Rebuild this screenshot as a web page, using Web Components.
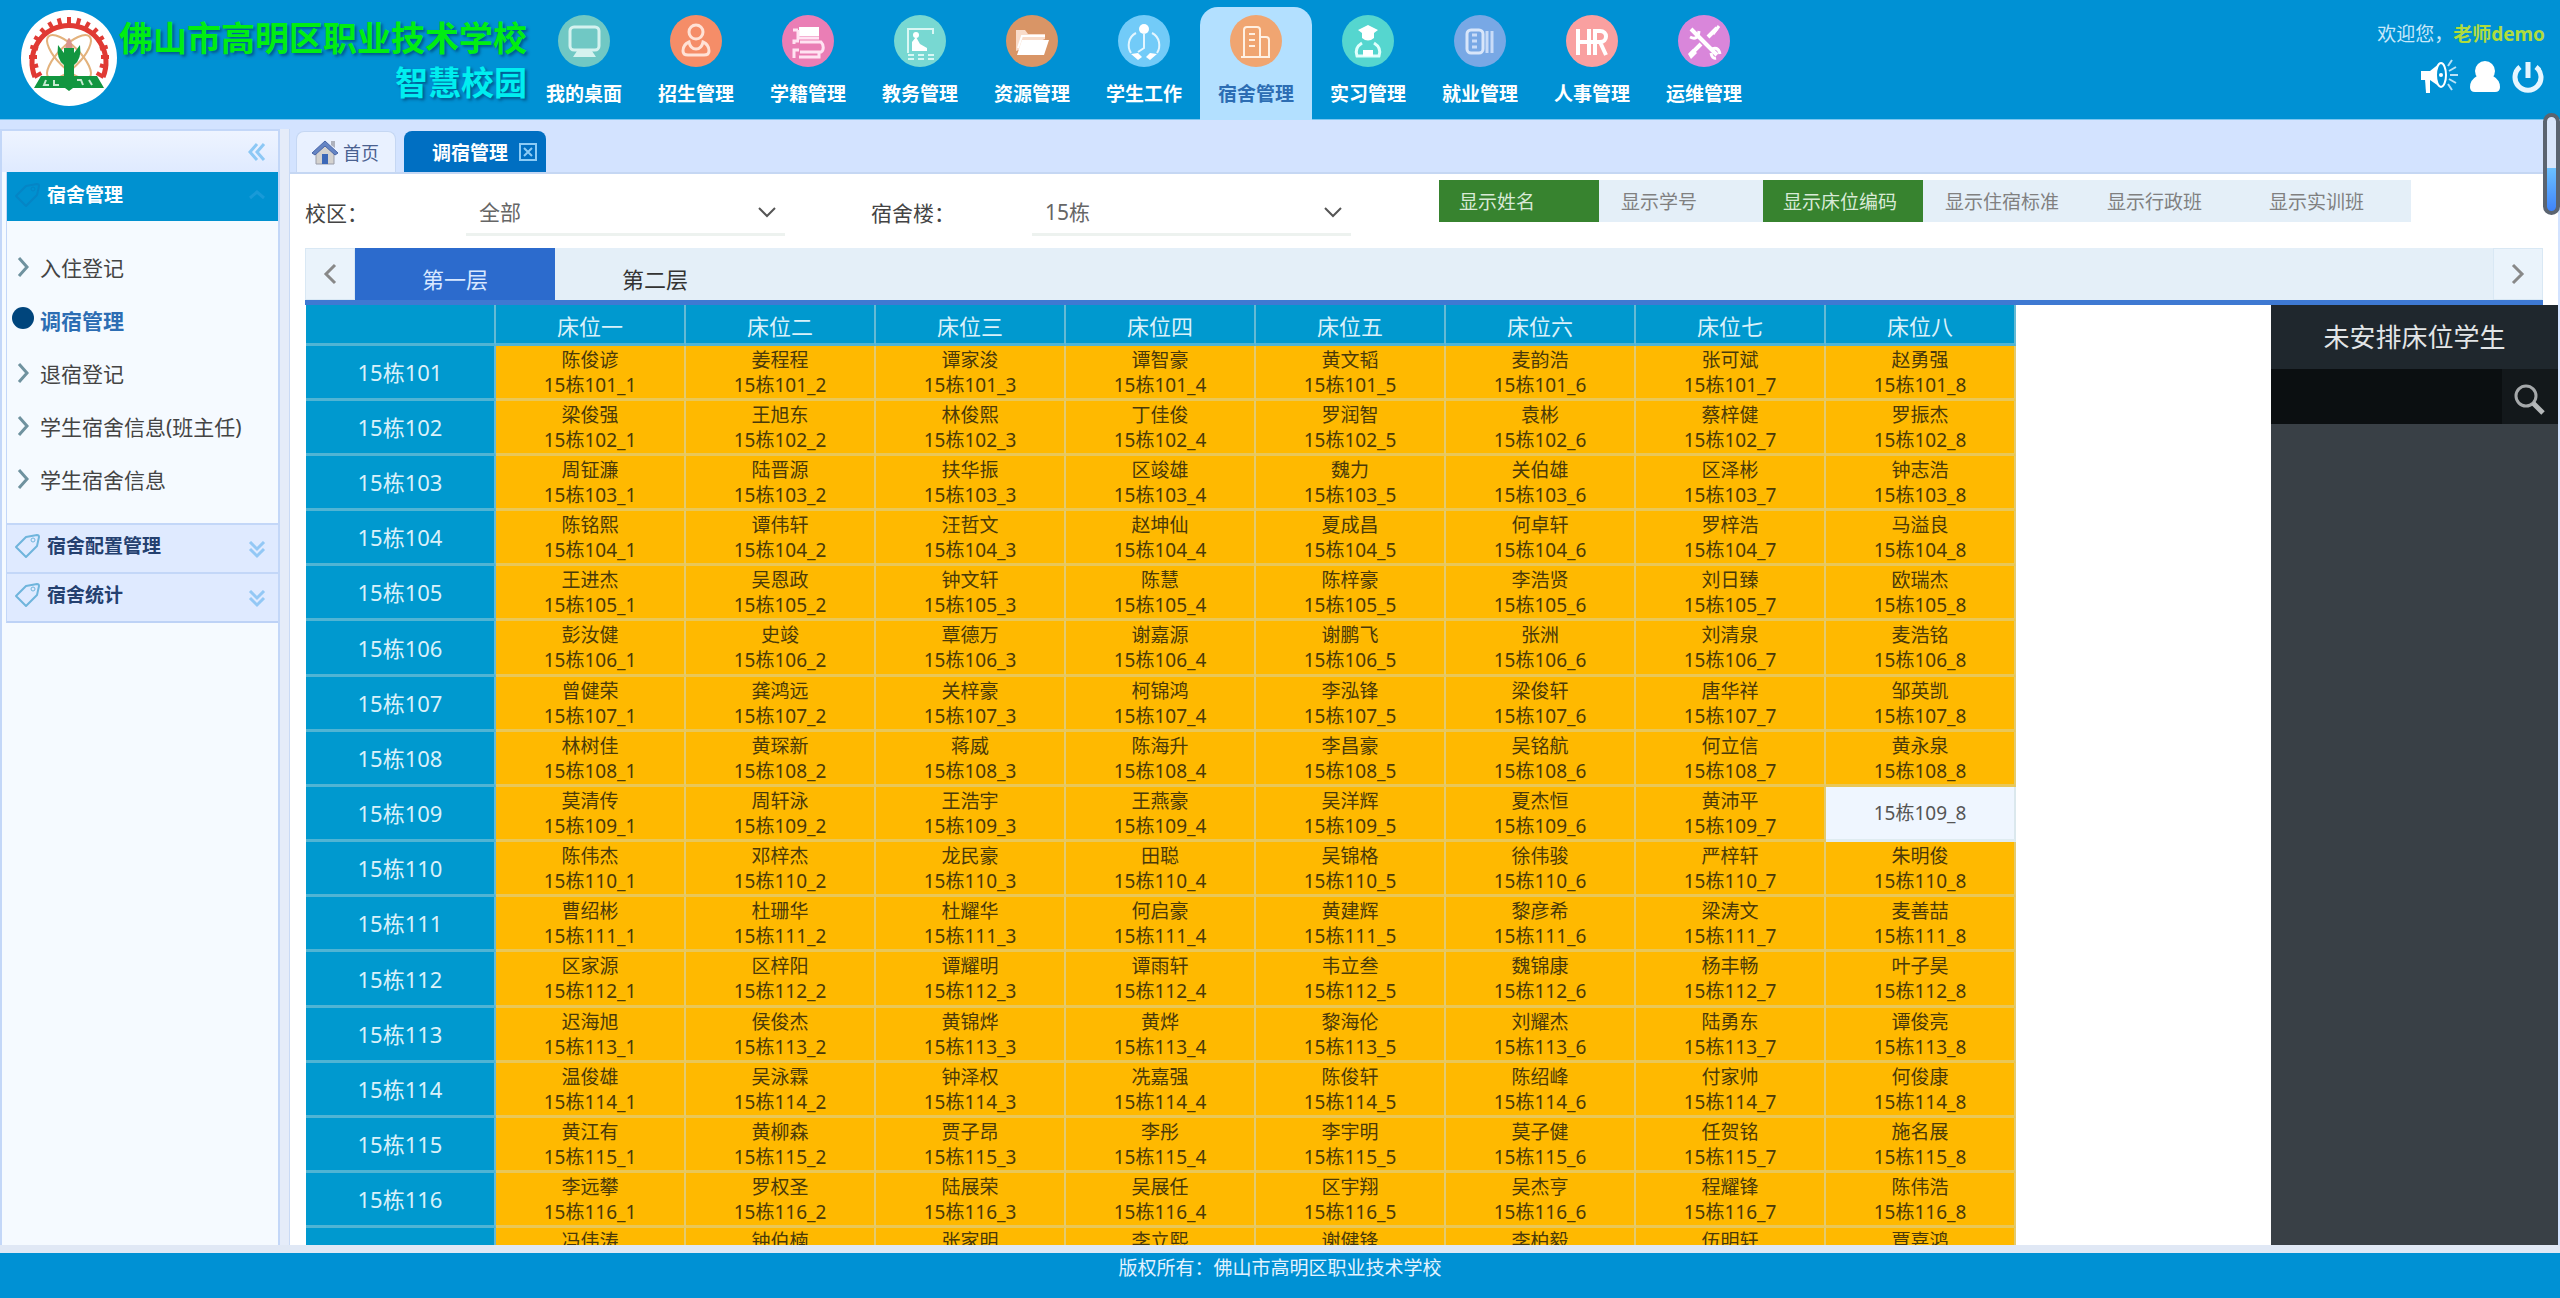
<!DOCTYPE html>
<html lang="zh-CN">
<head>
<meta charset="UTF-8">
<meta name="viewport" content="width=device-width, initial-scale=1.0">
<title>智慧校园</title>
<style>
  body {
    margin: 0;
    font-family: "Noto Sans", "Noto Sans CJK SC", sans-serif;
    font-size: 19px;
    color: #444;
    background: #d3e3ff;
  }
</style>
</head>
<body>
<campus-app>
  <campus-header slot="header">
    <nav-item icon="desktop" color="#70c8c4">我的桌面</nav-item>
    <nav-item icon="recruit" color="#f58d68">招生管理</nav-item>
    <nav-item icon="roll" color="#ea7eb5">学籍管理</nav-item>
    <nav-item icon="teach" color="#78d8d2">教务管理</nav-item>
    <nav-item icon="folder" color="#d99566">资源管理</nav-item>
    <nav-item icon="student" color="#72cbf8">学生工作</nav-item>
    <nav-item icon="dorm" color="#f0a571" active>宿舍管理</nav-item>
    <nav-item icon="intern" color="#55d6cf">实习管理</nav-item>
    <nav-item icon="job" color="#78a8e5">就业管理</nav-item>
    <nav-item icon="hr" color="#f9a0a0">人事管理</nav-item>
    <nav-item icon="tools" color="#d986da">运维管理</nav-item>
  </campus-header>
  <side-menu slot="side">
    <menu-group heading="宿舍管理" open>
      <menu-link>入住登记</menu-link>
      <menu-link active>调宿管理</menu-link>
      <menu-link>退宿登记</menu-link>
      <menu-link>学生宿舍信息(班主任)</menu-link>
      <menu-link>学生宿舍信息</menu-link>
    </menu-group>
    <menu-group heading="宿舍配置管理"></menu-group>
    <menu-group heading="宿舍统计"></menu-group>
  </side-menu>
  <page-tabs slot="main"></page-tabs>
  <filter-bar slot="main"></filter-bar>
  <floor-tabs slot="main"></floor-tabs>
  <dorm-board slot="main">
    <bed-table></bed-table>
    <student-panel slot="panel"></student-panel>
  </dorm-board>
  <span slot="footer">版权所有：佛山市高明区职业技术学校</span>
</campus-app>

<script>
const ICONS = {
  desktop: '<rect x="12" y="12" width="29" height="23" rx="4" fill="none" stroke="#d5f2ef" stroke-width="3"/><path d="M15 42h23l-4-6H19z" fill="#d5f2ef"/>',
  recruit: '<g fill="none" stroke="#ffe2d6" stroke-width="3"><circle cx="26" cy="17" r="7"/><path d="M19 27c-5 2-6 5-6 9 0 3 2 4 5 4h16c3 0 5-1 5-4 0-4-1-7-6-9-1 5-3 7-7 7s-6-2-7-7z"/></g>',
  roll: '<path d="M17 12h20v9H17z" fill="#fff"/><path d="M11 15h5m0 0v8h21M18 27h21c3 3 3 8 0 10H18m-6-8v-3h5m0 9h-5v8m5-1h20v-5" fill="none" stroke="#ffe3f2" stroke-width="3"/>',
  teach: '<path d="M14 38V14h25v5M14 14v24M14 40h6m4 0h6m4 0h6M14 44h6m4 0h6m4 0h6" fill="none" stroke="#d9f7f4" stroke-width="2"/><path d="M18 36V27l4-5 4 7 7 4v3z" fill="#fff"/><circle cx="22" cy="20" r="3" fill="#fff"/>',
  folder: '<path d="M10 36V15h9l3 4h17v5" fill="#f9dcca"/><path d="M16 25h27l-5 15H11z" fill="#fff"/><path d="M12 33l4-12h23" fill="none" stroke="#fff" stroke-width="2"/>',
  student: '<circle cx="26" cy="14" r="5" fill="#fff"/><path d="M26 18v15l-6 4M18 18c-8 4-9 14-5 20m21-20c8 4 9 14 5 20" fill="none" stroke="#e4f6ff" stroke-width="2"/><path d="M13 39l7-1 4 4-4 3zm26 0l-7-1-4 4 4 3z" fill="#fff"/>',
  dorm: '<g fill="none" stroke="#fff0e2" stroke-width="2"><path d="M14 42V15q0-3 3-3h10q3 0 3 3v27M30 22h6q3 0 3 3v17H11"/><path d="M19 19h6m-6 6h6m-6 6h6"/></g>',
  intern: '<path d="M16 15l10-5 10 5-4 3v5q-6 5-12 0v-5z" fill="#fff"/><path d="M20 28q-8 5-5 13h22q3-8-5-13" fill="none" stroke="#e0fffc" stroke-width="3"/><path d="M21 35h10v6H21z" fill="#fff"/>',
  job: '<rect x="13" y="15" width="16" height="23" rx="4" fill="none" stroke="#d8e6fa" stroke-width="3"/><path d="M18 20h5m-5 6h5m-5 6h5M33 16v22m5-22v22" stroke="#c9dcf8" stroke-width="3"/>',
  hr: '<path d="M12 14v26M23 14v26M12 27h17M29 40V16h5c8 0 8 11 0 11h-4m4 0l6 13" fill="none" stroke="#fff" stroke-width="4"/>',
  tools: '<path d="M13 14l7 7 19 19M39 13l-9 9M23 29L12 40" stroke="#fff" stroke-width="4"/><path d="M12 22q8 4 9-6M32 35q8-5 10 4M33 38q1 6 5 5M35 19l6-8" fill="none" stroke="#fff" stroke-width="3"/><path d="M10 39l5-5 4 4-6 6z" fill="#fff"/>'
};

// small line icons shared by the chrome of the page
const CHEVRON_DOWN = '<svg width="20" height="14" viewBox="0 0 20 14"><path d="M2 3l8 8 8-8" fill="none" stroke="#555" stroke-width="2"/></svg>';
const TAG = '<svg width="26" height="26" viewBox="0 0 26 26"><path d="M2 14L12 4l11-2q2 0 2 2l-2 9-11 11z" fill="none" stroke="currentColor" stroke-width="2" stroke-linejoin="round"/><circle cx="19" cy="7" r="2" fill="none" stroke="currentColor"/></svg>';

class CampusApp extends HTMLElement {
  connectedCallback() {
    this.attachShadow({ mode: 'open' });
    this.shadowRoot.innerHTML = `
      <style>
        :host { display: flex; flex-direction: column; height: 100vh; overflow: hidden; position: relative; }
        .work { flex: 1; min-height: 0; display: flex; background: #d3e3ff; }
        .splitter { width: 10px; margin-top: 9px; background: #e5ecf9; border-right: 1px solid #c9daf5; box-sizing: border-box; }
        main { flex: 1; min-width: 0; display: flex; flex-direction: column; background: #fff; border-right: 2px solid #d3e3ff; }
        footer { height: 45px; box-sizing: border-box; padding-top: 3px; line-height: 24px; text-align: center; color: #e3f3ff; background: #0091d4; }
        .strip { height: 8px; background: #e0e8f5; }
        .meter {
          position: absolute; right: 0; top: 113px; width: 17px; height: 102px; box-sizing: border-box;
          border: 4px solid #5b6470; border-radius: 9px;
          background: linear-gradient(#d9e6fb 54%, #6cc2ff 54%, #3f83fa);
        }
      </style>
      <slot name="header"></slot>
      <div class="work">
        <slot name="side"></slot>
        <div class="splitter"></div>
        <main><slot name="main"></slot></main>
      </div>
      <div class="strip"></div>
      <footer><slot name="footer"></slot></footer>
      <div class="meter"></div>
    `;
  }
}

class CampusHeader extends HTMLElement {
  connectedCallback() {
    // teeth of the gear in the school badge
    let teeth = '';
    for (let a = -120; a <= 120; a += 15) {
      teeth += `<rect x="47" y="8" width="4" height="8" transform="rotate(${a} 49 48)"/>`;
    }
    this.attachShadow({ mode: 'open' });
    this.shadowRoot.innerHTML = `
      <style>
        :host { display: flex; height: 119px; flex: none; background: #0091d4; border-bottom: 1px solid #7cc6f0; }
        .brand { display: flex; width: 528px; box-sizing: border-box; padding: 9px 2px 0 20px; }
        .brand svg { flex: none; margin-right: 1px; }
        .name { flex: 1; text-align: right; font-weight: 700; white-space: nowrap; text-shadow: 2px 2px 3px rgba(0, 50, 90, .6); font-family: "Noto Sans CJK SC", sans-serif; }
        h1 { margin: 4px 0 0; font-size: 34px; line-height: 48px; color: #00ee12; }
        p { margin: 0; font-size: 33px; line-height: 40px; color: #00eef0; }
        nav { display: flex; }
        .user { margin-left: auto; padding: 20px 15px 0 0; }
        .hello { line-height: 28px; color: #c8e8fa; }
        .hello b { color: #b0dc3c; }
        .acts { display: flex; justify-content: flex-end; gap: 10px; margin-top: 11px; }
        button { padding: 0; border: 0; background: none; height: 36px; }
      </style>
      <div class="brand">
        <svg width="98" height="98" viewBox="0 0 98 98">
          <circle cx="49" cy="49" r="48" fill="#fff"/>
          <path d="M15 68A37 37 0 1 1 83 68" fill="none" stroke="#e03a34" stroke-width="5"/>
          <g fill="#e03a34">${teeth}</g>
          <g fill="none" stroke="#e3b27c" stroke-width="2"><ellipse cx="49" cy="48" rx="29" ry="11" transform="rotate(45 49 48)"/><ellipse cx="49" cy="48" rx="29" ry="11" transform="rotate(-45 49 48)"/></g>
          <path d="M45 40q4-22 8 0l-2 6h-4z" fill="#d8938c"/>
          <path d="M38 36l6 8v-5h10v5l6-8q2 14-6 20v14H44V56q-8-6-6-20z" fill="#129640"/>
          <path d="M21 67h26l2 3 2-3h26l7 12H53l-4 3-4-3H14z" fill="#129640"/>
          <path d="M26 71l-2 5h5m5-5v5h5m18-5h4l2 5m6-5l3 5" fill="none" stroke="#c5e9cf" stroke-width="2"/>
        </svg>
        <div class="name"><h1>佛山市高明区职业技术学校</h1><p>智慧校园</p></div>
      </div>
      <nav><slot></slot></nav>
      <div class="user">
        <div class="hello">欢迎您，<b>老师demo</b></div>
        <div class="acts">
          <button aria-label="公告"><svg width="40" height="36" viewBox="0 0 40 36"><path d="M2 12h9l10-8v24l-10-7H2z" fill="#fff"/><path d="M6 20h5v14H7z" fill="#fff"/><ellipse cx="22" cy="16" rx="5" ry="12" fill="#0091d4" stroke="#fff" stroke-width="2"/><circle cx="22" cy="16" r="2" fill="#fff"/><path d="M29 7l4-6m-3 11l7-4m-6 8h8m-9 4l7 4m-8 1l4 6" stroke="#b9e2f7" stroke-width="2"/></svg></button>
          <button aria-label="用户"><svg width="32" height="36" viewBox="0 0 32 36"><circle cx="16" cy="12" r="10" fill="#fff"/><path d="M8 17h16q7 4 7 11 0 5-5 5H6q-5 0-5-5 0-7 7-11z" fill="#fff"/></svg></button>
          <button aria-label="退出"><svg width="34" height="36" viewBox="0 0 34 36"><path d="M9 8a13 13 0 1 0 16 0M17 3v16" fill="none" stroke="#e6f6ff" stroke-width="5"/></svg></button>
        </div>
      </div>
    `;
  }
}

class NavItem extends HTMLElement {
  connectedCallback() {
    this.attachShadow({ mode: 'open' });
    this.shadowRoot.innerHTML = `
      <style>
        :host { display: block; width: 112px; }
        a {
          display: block; height: 113px; margin-top: 7px; padding-top: 8px; box-sizing: border-box;
          border-radius: 18px 18px 0 0; text-align: center; text-decoration: none;
          font-weight: 700; color: #fff;
        }
        svg { display: block; margin: 0 auto 15px; }
        span { display: block; line-height: 24px; }
        :host([active]) a { background: #b3e0ff; color: #2c6db3; }
      </style>
      <a href="#">
        <svg width="52" height="52" viewBox="0 0 52 52"><circle cx="26" cy="26" r="26" fill="${this.getAttribute('color')}"/>${ICONS[this.getAttribute('icon')]}</svg>
        <span><slot></slot></span>
      </a>
    `;
  }
}

class SideMenu extends HTMLElement {
  connectedCallback() {
    this.attachShadow({ mode: 'open' });
    this.shadowRoot.innerHTML = `
      <style>
        :host { display: block; width: 280px; box-sizing: border-box; margin-top: 9px; border: 2px solid #c3d7f8; border-bottom: 0; background: #f5faff; }
        .top { height: 41px; display: flex; justify-content: flex-end; align-items: center; padding-right: 12px; background: linear-gradient(#eef4ff, #dfeaff); }
        button { padding: 0; border: 0; background: none; height: 18px; }
        .groups { margin-left: 4px; border-left: 1px solid #c3d7f8; border-bottom: 2px solid #bdd2f6; }
      </style>
      <div class="top">
        <button aria-label="收起"><svg width="18" height="18" viewBox="0 0 18 18"><path d="M9 1L2 9l7 8M16 1L9 9l7 8" fill="none" stroke="#8cc8f5" stroke-width="3"/></svg></button>
      </div>
      <div class="groups"><slot></slot></div>
    `;
  }
}

class MenuGroup extends HTMLElement {
  connectedCallback() {
    this.attachShadow({ mode: 'open' });
    const arrow = this.hasAttribute('open') ? 'M2 8l7-6 7 6' : 'M2 1l7 7 7-7M2 8l7 7 7-7';
    this.shadowRoot.innerHTML = `
      <style>
        :host { display: block; }
        h2 {
          display: flex; align-items: center; margin: 0; height: 49px; box-sizing: border-box;
          padding: 0 12px 6px 7px; border-top: 2px solid #c3d7f8;
          font-size: 19px; line-height: 24px; color: #24406f; background: #dfeaff;
        }
        h2 svg:first-child { color: #6fb5dc; margin-right: 7px; }
        h2 svg:last-child { margin-left: auto; margin-top: 8px; }
        .list { padding: 19px 0 18px; }
        :host([open]) h2 { background: #0091d0; border-top-color: #0091d0; color: #fff; }
        :host([open]) h2 svg:first-child { color: #0585c5; }
        :host(:not([open])) .list { display: none; }
      </style>
      <h2>${TAG}${this.getAttribute('heading')}<svg width="18" height="18" viewBox="0 0 18 18"><path d="${arrow}" fill="none" stroke="${this.hasAttribute('open') ? '#189ad8' : '#93c8f5'}" stroke-width="3"/></svg></h2>
      <div class="list"><slot></slot></div>
    `;
  }
}

class MenuLink extends HTMLElement {
  connectedCallback() {
    this.attachShadow({ mode: 'open' });
    const mark = this.hasAttribute('active')
      ? '<circle cx="13" cy="12" r="11" fill="#00457c"/>'
      : '<path d="M9 5l8 9-8 9" fill="none" stroke="#6f929f" stroke-width="3"/>';
    this.shadowRoot.innerHTML = `
      <style>
        :host { display: block; height: 53px; }
        a { display: flex; align-items: center; height: 53px; padding-left: 3px; font-size: 21px; white-space: nowrap; color: #444; text-decoration: none; }
        svg { flex: none; margin-right: 4px; }
        :host([active]) a { color: #2c6db3; font-weight: 700; }
      </style>
      <a href="#"><svg width="26" height="28" viewBox="0 0 26 28">${mark}</svg><slot></slot></a>
    `;
  }
}

class PageTabs extends HTMLElement {
  connectedCallback() {
    this.attachShadow({ mode: 'open' });
    this.shadowRoot.innerHTML = `
      <style>
        :host { display: flex; align-items: flex-end; gap: 8px; height: 54px; box-sizing: border-box; flex: none; padding: 0 6px; background: #d3e3ff; border-bottom: 2px solid #c5d7f3; }
        a { display: flex; align-items: center; height: 41px; box-sizing: border-box; border-radius: 8px 8px 0 0; text-decoration: none; }
        .home { width: 100px; padding-left: 14px; gap: 4px; font-size: 18px; color: #4a6190; background: #e9f1ff; border: 1px solid #c5d7f3; border-bottom: 0; }
        .now { width: 142px; justify-content: flex-end; gap: 10px; padding-right: 8px; font-weight: 700; color: #fff; background: #006fc2; }
      </style>
      <a class="home" href="#"><svg width="28" height="28" viewBox="0 0 28 28"><path d="M5 13v13h18V13l-9-8z" fill="#d4d2cf" stroke="#9a9da8"/><path d="M1 15L14 3l13 12-3 2L14 8 4 17z" fill="#6585c4" stroke="#4a66a8"/><path d="M20 3h4v7l-4-3z" fill="#aeb2bd"/><path d="M11 16h6v10h-6z" fill="#3c68b8"/></svg>首页</a>
      <a class="now" href="#">调宿管理<svg width="20" height="20" viewBox="0 0 20 20"><path d="M2 2h16v16H2zM6 6l8 8m0-8l-8 8" fill="none" stroke="#8ccbf5" stroke-width="2"/></svg></a>
    `;
  }
}

class FilterBar extends HTMLElement {
  connectedCallback() {
    const toggles = [['显示姓名', true], ['显示学号', false], ['显示床位编码', true], ['显示住宿标准', false], ['显示行政班', false], ['显示实训班', false]];
    this.attachShadow({ mode: 'open' });
    this.shadowRoot.innerHTML = `
      <style>
        :host { display: flex; align-items: flex-start; height: 74px; flex: none; padding-left: 15px; }
        label { width: 161px; padding-top: 24px; line-height: 30px; font-size: 21px; }
        .pick { display: grid; width: 319px; height: 62px; box-sizing: border-box; padding-top: 17px; border-bottom: 3px solid #edf2ef; margin-right: 86px; }
        .pick > * { grid-area: 1 / 1; }
        .pick svg { justify-self: end; align-self: center; margin-right: 8px; pointer-events: none; }
        select { appearance: none; border: 0; background: none; padding: 0 0 0 13px; font: inherit; font-size: 21px; color: #666; }
        .toggles { display: flex; gap: 2px; margin: 6px 0 0 2px; padding-right: 2px; background: #e4eff8; }
        button { width: 160px; height: 42px; padding: 0 0 0 20px; border: 0; background: none; font: inherit; text-align: left; color: #808080; }
        button[aria-pressed="true"] { background: #37832f; color: #d9ead7; }
      </style>
      <label for="campus">校区：</label>
      <div class="pick"><select id="campus"><option>全部</option></select>${CHEVRON_DOWN}</div>
      <label for="building">宿舍楼：</label>
      <div class="pick"><select id="building"><option>15栋</option></select>${CHEVRON_DOWN}</div>
      <div class="toggles">
        ${toggles.map(([text, on]) => `<button aria-pressed="${on}">${text}</button>`).join('')}
      </div>
    `;
  }
}

class FloorTabs extends HTMLElement {
  connectedCallback() {
    this.attachShadow({ mode: 'open' });
    this.shadowRoot.innerHTML = `
      <style>
        :host { display: flex; flex: none; height: 52px; margin: 0 15px; background: #e4eff8; border-bottom: 5px solid #3e79d2; }
        button { border: 0; padding: 8px 0 0; font: inherit; font-size: 22px; color: #333; background: none; width: 200px; }
        .on { background: #2c6bcd; color: #d8e8ff; }
        .step { width: 50px; padding: 4px 0 0; background: #eaf3fb; border: 1px solid #d9e8f4; }
        .step:last-child { margin-left: auto; }
      </style>
      <button class="step" aria-label="上一层"><svg width="14" height="22" viewBox="0 0 14 22"><path d="M12 2L3 11l9 9" fill="none" stroke="#888" stroke-width="3"/></svg></button>
      <button class="on">第一层</button>
      <button>第二层</button>
      <button class="step" aria-label="下一层"><svg width="14" height="22" viewBox="0 0 14 22"><path d="M2 2l9 9-9 9" fill="none" stroke="#888" stroke-width="3"/></svg></button>
    `;
  }
}

class DormBoard extends HTMLElement {
  connectedCallback() {
    this.attachShadow({ mode: 'open' });
    this.shadowRoot.innerHTML = `
      <style>
        :host { display: flex; justify-content: space-between; flex: 1; min-height: 0; padding-left: 16px; }
        .beds { overflow: hidden; }
      </style>
      <div class="beds"><slot></slot></div>
      <slot name="panel"></slot>
    `;
  }
}

const ROOMS = [
  '陈俊谚 姜程程 谭家浚 谭智豪 黄文韬 麦韵浩 张可斌 赵勇强',
  '梁俊强 王旭东 林俊熙 丁佳俊 罗润智 袁彬 蔡梓健 罗振杰',
  '周钲濂 陆晋源 扶华振 区竣雄 魏力 关伯雄 区泽彬 钟志浩',
  '陈铭熙 谭伟轩 汪哲文 赵坤仙 夏成昌 何卓轩 罗梓浩 马溢良',
  '王进杰 吴恩政 钟文轩 陈慧 陈梓豪 李浩贤 刘日臻 欧瑞杰',
  '彭汝健 史竣 覃德万 谢嘉源 谢鹏飞 张洲 刘清泉 麦浩铭',
  '曾健荣 龚鸿远 关梓豪 柯锦鸿 李泓锋 梁俊轩 唐华祥 邹英凯',
  '林树佳 黄琛新 蒋威 陈海升 李昌豪 吴铭航 何立信 黄永泉',
  '莫清传 周轩泳 王浩宇 王燕豪 吴洋辉 夏杰恒 黄沛平',
  '陈伟杰 邓梓杰 龙民豪 田聪 吴锦格 徐伟骏 严梓轩 朱明俊',
  '曹绍彬 杜珊华 杜耀华 何启豪 黄建辉 黎彦希 梁涛文 麦善喆',
  '区家源 区梓阳 谭耀明 谭雨轩 韦立叁 魏锦康 杨丰畅 叶子昊',
  '迟海旭 侯俊杰 黄锦烨 黄烨 黎海伦 刘耀杰 陆勇东 谭俊亮',
  '温俊雄 吴泳霖 钟泽权 冼嘉强 陈俊轩 陈绍峰 付家帅 何俊康',
  '黄江有 黄柳森 贾子昂 李彤 李宇明 莫子健 任贺铭 施名展',
  '李远攀 罗权圣 陆展荣 吴展任 区宇翔 吴杰亨 程耀锋 陈伟浩'
];

// the room after the last full row, cut off by the bottom of the board
const NEXT_ROOM = '冯伟涛 钟伯楠 张家明 李立熙 谢健锋 李柏毅 伍明轩 覃嘉鸿';

class BedTable extends HTMLElement {
  connectedCallback() {
    const rows = ROOMS.map((line, i) => {
      const room = '15栋' + (101 + i);
      const names = line.split(' ');
      let cells = '';
      for (let bed = 1; bed <= 8; bed++) {
        const name = names[bed - 1];
        cells += name
          ? `<td>${name}<br>${room}_${bed}</td>`
          : `<td class="free">${room}_${bed}</td>`;
      }
      return `<tr><th scope="row">${room}</th>${cells}</tr>`;
    }).join('');

    this.attachShadow({ mode: 'open' });
    this.shadowRoot.innerHTML = `
      <style>
        :host { display: block; }
        table { table-layout: fixed; width: 1710px; border-collapse: separate; border-spacing: 0; }
        th, td {
          box-sizing: border-box; height: 55px; padding: 1px 0 0; text-align: center; line-height: 25px;
          border-right: 2px solid rgba(200, 220, 220, .5); border-bottom: 3px solid rgba(200, 220, 220, .4);
        }
        th { font-size: 22px; font-weight: 400; color: #d9f1fa; background: #0099cf; }
        thead th { height: 41px; padding-top: 4px; }
        tbody tr:nth-child(6n) > * { height: 56px; }
        td { background: #ffb900; color: #4a3a0a; }
        .free { background: #eff6ff; color: #555; }
        .cut td { vertical-align: top; }
      </style>
      <table>
        <thead><tr><th></th>${[...'一二三四五六七八'].map(n => `<th scope="col">床位${n}</th>`).join('')}</tr></thead>
        <tbody>
          ${rows}
          <tr class="cut"><th></th>${NEXT_ROOM.split(' ').map(name => `<td>${name}</td>`).join('')}</tr>
        </tbody>
      </table>
    `;
  }
}

class StudentPanel extends HTMLElement {
  connectedCallback() {
    this.attachShadow({ mode: 'open' });
    this.shadowRoot.innerHTML = `
      <style>
        :host { display: block; width: 287px; flex: none; background: #394046; }
        h2 { margin: 0; font-size: 26px; font-weight: 400; line-height: 64px; text-align: center; color: #e2e5e7; background: #1f272d; }
        .search { display: flex; height: 55px; }
        input { flex: 1; min-width: 0; border: 0; padding: 0 12px; font: inherit; color: #ddd; background: #0b0f11; }
        button { width: 56px; padding: 10px 0 0; border: 0; background: #13181b; }
      </style>
      <h2>未安排床位学生</h2>
      <div class="search">
        <input type="text" aria-label="搜索学生">
        <button aria-label="搜索"><svg width="34" height="34" viewBox="0 0 34 34"><circle cx="13" cy="13" r="10" fill="none" stroke="#a5a8aa" stroke-width="3"/><path d="M20 20l10 10" stroke="#b5b8ba" stroke-width="5"/></svg></button>
      </div>
    `;
  }
}

customElements.define('campus-app', CampusApp);
customElements.define('campus-header', CampusHeader);
customElements.define('nav-item', NavItem);
customElements.define('side-menu', SideMenu);
customElements.define('menu-group', MenuGroup);
customElements.define('menu-link', MenuLink);
customElements.define('page-tabs', PageTabs);
customElements.define('filter-bar', FilterBar);
customElements.define('floor-tabs', FloorTabs);
customElements.define('dorm-board', DormBoard);
customElements.define('bed-table', BedTable);
customElements.define('student-panel', StudentPanel);
</script>
</body>
</html>
